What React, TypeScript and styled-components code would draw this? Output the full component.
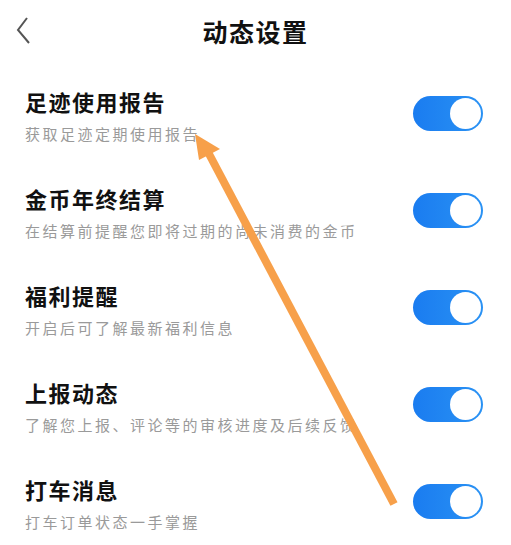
import styled, { createGlobalStyle } from "styled-components";

const GlobalStyle = createGlobalStyle`
  html, body {
    margin: 0;
    padding: 0;
    background: #ffffff;
  }
  body {
    font-family: "Noto Sans CJK SC", "Noto Sans", sans-serif;
  }
`;

const Page = styled.div`
  position: relative;
  width: 511px;
  height: 545px;
  overflow: hidden;
  background: #ffffff;
`;

const Header = styled.div`
  position: relative;
  height: 62px;
  display: flex;
  align-items: center;
  justify-content: center;
`;

const BackButton = styled.button`
  position: absolute;
  left: 12px;
  top: 13px;
  width: 28px;
  height: 34px;
  padding: 0;
  border: none;
  background: none;
  display: flex;
  align-items: center;
  justify-content: center;
`;

const Title = styled.h1`
  margin: 0;
  font-size: 25px;
  font-weight: 700;
  color: #111111;
  letter-spacing: 1.5px;
`;

const List = styled.div`
  display: flex;
  flex-direction: column;
  padding: 24px 28px 0 25px;
`;

const Row = styled.div`
  height: 97px;
  display: flex;
  align-items: flex-start;
  justify-content: space-between;
`;

const TextBlock = styled.div`
  display: flex;
  flex-direction: column;
  gap: 7px;
`;

const RowTitle = styled.div`
  font-size: 22px;
  font-weight: 700;
  color: #111111;
  line-height: 30px;
  letter-spacing: 1.5px;
`;

const RowSub = styled.div`
  font-size: 15px;
  color: #9a9a9a;
  line-height: 22px;
  letter-spacing: 2.5px;
`;

const Toggle = styled.div<{ $on: boolean }>`
  position: relative;
  margin-top: 10px;
  width: 70px;
  height: 35px;
  border-radius: 18px;
  background: ${(p) => (p.$on ? "linear-gradient(90deg, #1a7cf0, #2a92f4)" : "#d8d8d8")};
  flex-shrink: 0;
`;

const Knob = styled.div<{ $on: boolean }>`
  position: absolute;
  top: 2px;
  ${(p) => (p.$on ? "right: 2px;" : "left: 2px;")}
  width: 31px;
  height: 31px;
  border-radius: 50%;
  background: #ffffff;
`;

const Arrow = styled.svg`
  position: absolute;
  left: 0;
  top: 0;
  pointer-events: none;
`;

const items = [
  { title: "足迹使用报告", sub: "获取足迹定期使用报告" },
  { title: "金币年终结算", sub: "在结算前提醒您即将过期的尚未消费的金币" },
  { title: "福利提醒", sub: "开启后可了解最新福利信息" },
  { title: "上报动态", sub: "了解您上报、评论等的审核进度及后续反馈" },
  { title: "打车消息", sub: "打车订单状态一手掌握" },
];

export default function App() {
  return (
    <Page>
      <GlobalStyle />
      <Header>
        <BackButton>
          <svg width="28" height="34" viewBox="0 0 28 34">
            <path d="M15 5 L6 17 L17 30" fill="none" stroke="#555" strokeWidth="2" />
          </svg>
        </BackButton>
        <Title>动态设置</Title>
      </Header>
      <List>
        {items.map((it) => (
          <Row key={it.title}>
            <TextBlock>
              <RowTitle>{it.title}</RowTitle>
              <RowSub>{it.sub}</RowSub>
            </TextBlock>
            <Toggle $on>
              <Knob $on />
            </Toggle>
          </Row>
        ))}
      </List>
      <Arrow width="511" height="545" viewBox="0 0 511 545">
        <line x1="394" y1="504" x2="208" y2="152" stroke="#f7a04a" strokeWidth="8" />
        <polygon points="195,134 220,149 199,160" fill="#f7a04a" />
      </Arrow>
    </Page>
  );
}
